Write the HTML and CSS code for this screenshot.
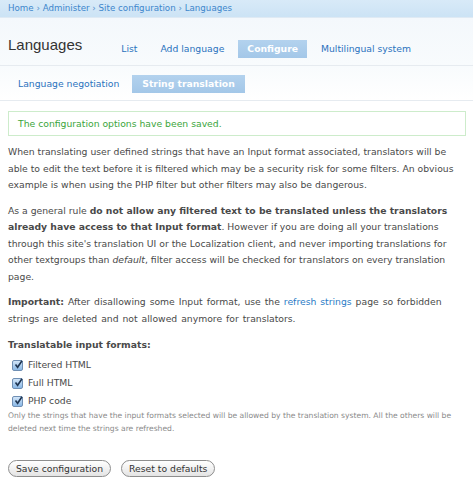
FILE: index.html
```html
<!DOCTYPE html>
<html lang="en">
<head>
    <meta charset="UTF-8">
    <meta name="viewport" content="width=device-width, initial-scale=1.0">
    <title>Languages</title>
    <link rel="stylesheet" href="styles.css">
</head>
<body>
    <div class="breadcrumb">
        <a href="#">Home</a> › <a href="#">Administer</a> › <a href="#">Site configuration</a> › <a href="#">Languages</a>
    </div>
    <div class="header">
        <h2>Languages</h2>
        <ul class="tabs primary">
            <li><a href="#">List</a></li>
            <li><a href="#">Add language</a></li>
            <li class="active"><a href="#">Configure</a></li>
            <li><a href="#">Multilingual system</a></li>
        </ul>
    </div>
    <ul class="tabs secondary">
        <li><a href="#">Language negotiation</a></li>
        <li class="active"><a href="#">String translation</a></li>
    </ul>
    <div class="content">
        <div class="messages status">The configuration options have been saved.</div>
        <p>When translating user defined strings that have an Input format associated, translators will be able to edit the text before it is filtered which may be a security risk for some filters. An obvious example is when using the PHP filter but other filters may also be dangerous.</p>
        <p>As a general rule <strong>do not allow any filtered text to be translated unless the translators already have access to that Input format</strong>. However if you are doing all your translations through this site's translation UI or the Localization client, and never importing translations for other textgroups than <em>default</em>, filter access will be checked for translators on every translation page.</p>
        <p class="note"><strong>Important:</strong> After disallowing some Input format, use the <a href="#">refresh strings</a> page so forbidden strings are deleted and not allowed anymore for translators.</p>
        <div class="form-item">
            <label class="group-label">Translatable input formats:</label>
            <div class="checkboxes">
                <label class="option"><span class="check"><svg width="11" height="11" viewBox="0 0 11 11"><path d="M2.5 5.5 L4.6 8.3 L9 1.8" fill="none" stroke="#1f3552" stroke-width="1.6"/></svg></span>Filtered HTML</label>
                <label class="option"><span class="check"><svg width="11" height="11" viewBox="0 0 11 11"><path d="M2.5 5.5 L4.6 8.3 L9 1.8" fill="none" stroke="#1f3552" stroke-width="1.6"/></svg></span>Full HTML</label>
                <label class="option"><span class="check"><svg width="11" height="11" viewBox="0 0 11 11"><path d="M2.5 5.5 L4.6 8.3 L9 1.8" fill="none" stroke="#1f3552" stroke-width="1.6"/></svg></span>PHP code</label>
            </div>
            <div class="description">Only the strings that have the input formats selected will be allowed by the translation system. All the others will be deleted next time the strings are refreshed.</div>
        </div>
        <div class="actions">
            <button class="form-submit">Save configuration</button>
            <button class="form-submit">Reset to defaults</button>
        </div>
    </div>
</body>
</html>
```

FILE: styles.css
```css
body {
    margin: 0;
    background: #fff;
    color: #494949;
    font-family: "DejaVu Sans", Verdana, sans-serif;
    font-size: 9.25px;
    line-height: 16.5px;
}
a {
    color: #2a7bc6;
    text-decoration: none;
}
.breadcrumb {
    height: 18px;
    line-height: 16px;
    padding: 0 8px;
    background: linear-gradient(to bottom, #d8eaf8, #cce3f5);
    border-bottom: 1px solid #dfeaf4;
    color: #4f8fcc;
    font-size: 8.7px;
    box-sizing: border-box;
}
.breadcrumb a {
    color: #3d86cc;
}
.header {
    display: flex;
    align-items: flex-end;
    height: 47px;
    padding: 0 8px;
    background: linear-gradient(to bottom, #f4f8fc, #f8fbfd);
    border-bottom: 1px solid #e6ebf0;
}
.header h2 {
    margin: 0 30px 10px 0;
    font-family: "Liberation Sans", Arial, sans-serif;
    font-weight: normal;
    font-size: 15px;
    line-height: 20px;
    color: #333;
}
.tabs {
    display: flex;
    margin: 0;
    padding: 0;
    list-style: none;
}
.tabs li a {
    display: block;
    height: 18px;
    line-height: 18px;
    color: #2a72bd;
}
.tabs li.active a {
    background: linear-gradient(to bottom, #b3d2ee, #a3c7e8);
    color: #fff;
    font-weight: bold;
}
.primary {
    gap: 5px;
    margin-bottom: 7px;
}
.primary li a {
    padding: 0 9px;
}
.secondary {
    gap: 3px;
    height: 35px;
    padding: 9px 8px 0;
    box-sizing: border-box;
    background: linear-gradient(to bottom, #f8fbfd, #fff);
    border-bottom: 1px solid #e6ebf0;
}
.secondary li a {
    padding: 0 10px;
}
.content {
    padding: 10px 7px 0 8px;
}
.messages {
    height: 25px;
    line-height: 23px;
    padding: 0 9px;
    border: 1px solid #cdeccb;
    color: #3ba53b;
    box-sizing: border-box;
}
p {
    margin: 8px 2px 9px 0;
}
p.note {
    word-spacing: 1px;
}
.form-item {
    margin-top: 10px;
}
.group-label {
    display: block;
    font-weight: bold;
    line-height: 16px;
}
.checkboxes {
    padding: 3px 0 0 4px;
}
.option {
    display: flex;
    align-items: center;
    gap: 5px;
    height: 18px;
}
.check {
    display: block;
    width: 9px;
    height: 9px;
    border: 1px solid #6f8fb4;
    border-radius: 2px;
    background: linear-gradient(to bottom, #d2e5f8, #8ab8e6);
    position: relative;
}
.check svg {
    position: absolute;
    left: 0;
    top: -2px;
}
.description {
    margin-top: -1px;
    padding-right: 2px;
    font-size: 7.6px;
    line-height: 13px;
    color: #8a8a8a;
}
.actions {
    display: flex;
    gap: 10px;
    margin-top: 25px;
}
.form-submit {
    height: 17px;
    padding: 0 7px;
    border: 1px solid #8e8e8e;
    border-radius: 9px;
    background: linear-gradient(to bottom, #fff, #e4e4e4);
    color: #333;
    font-family: "DejaVu Sans", Verdana, sans-serif;
    font-size: 9.25px;
    line-height: 15px;
}
```
